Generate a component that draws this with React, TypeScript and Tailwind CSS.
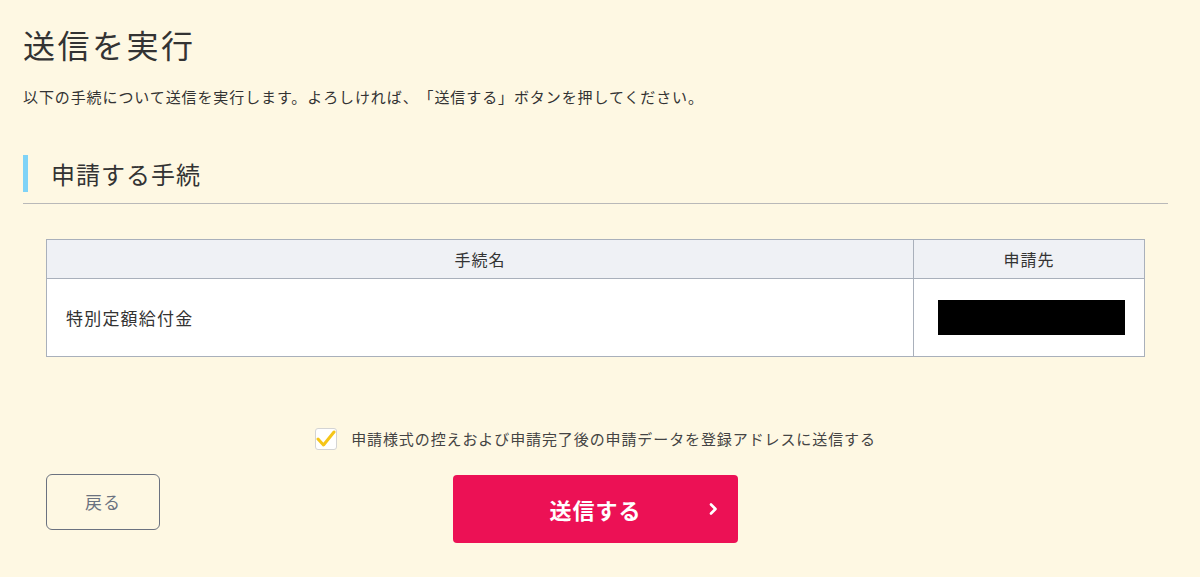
import React from "react";

export default function App() {
  const font = { fontFamily: '"Noto Sans CJK JP", "Noto Sans", sans-serif' };
  return (
    <div
      className="min-h-screen w-full bg-[#fef8e3] pl-[23px] pr-[32px] pt-[24px] text-[#333]"
      style={font}
    >
      <h1 className="text-[32px] leading-[40px] tracking-[2.5px] font-normal text-[#333]">
        送信を実行
      </h1>
      <p className="mt-[23px] text-[15px] leading-[20px] tracking-[0.9px] text-[#333] [text-spacing-trim:space-all]">
        以下の手続について送信を実行します。よろしければ、「送信する」ボタンを押してください。
      </p>

      <div className="mt-[48px] flex h-[37px] items-center border-l-[5px] border-[#7fd3f7] pl-[23px]">
        <h2 className="text-[24px] leading-[30px] tracking-[1px] font-normal text-[#333]">
          申請する手続
        </h2>
      </div>
      <div className="mt-[11px] h-px bg-[#b9b9b9]" />

      <div className="mx-[23px] mt-[35px]">
        <table className="w-full border-collapse border border-[#a9b0bb] bg-white">
          <thead>
            <tr className="h-[39px] bg-[#eff1f5]">
              <th className="border border-[#a9b0bb] text-center text-[16px] font-normal tracking-[1px] text-[#333]">
                手続名
              </th>
              <th className="w-[231px] border border-[#a9b0bb] text-center text-[16px] font-normal tracking-[1px] text-[#333]">
                申請先
              </th>
            </tr>
          </thead>
          <tbody>
            <tr className="h-[78px]">
              <td className="border border-[#a9b0bb] px-[19px] text-[17px] tracking-[1.2px] text-[#333]">
                特別定額給付金
              </td>
              <td className="border border-[#a9b0bb] pl-[24px]">
                <div className="h-[35px] w-[187px] bg-black" />
              </td>
            </tr>
          </tbody>
        </table>

        <div className="mt-[71px] flex h-[22px] items-center justify-center gap-[14px]">
          <div className="flex h-[22px] w-[22px] items-center justify-center rounded-[3px] border border-[#d4d4d4] bg-white">
            <svg width="20" height="18" viewBox="0 0 20 18" fill="none">
              <polyline
                points="2,9 7.5,15 18,2"
                stroke="#f5c518"
                strokeWidth="3"
                strokeLinecap="round"
                strokeLinejoin="round"
              />
            </svg>
          </div>
          <span className="text-[15px] leading-[20px] tracking-[0.9px] text-[#444]">
            申請様式の控えおよび申請完了後の申請データを登録アドレスに送信する
          </span>
        </div>

        <div className="mt-[24px] grid grid-cols-[1fr_auto_1fr] items-start">
          <div className="justify-self-start">
            <button className="flex h-[56px] w-[114px] items-center justify-center rounded-[6px] border border-[#6b7280] text-[17px] tracking-[1px] text-[#6b7280]">
              戻る
            </button>
          </div>
          <button className="relative mt-px flex h-[68px] w-[285px] items-center justify-center rounded-[4px] bg-[#ec1155] text-[22px] font-bold tracking-[1px] text-white">
            送信する
            <svg
              className="absolute right-[20px] top-1/2 -translate-y-1/2"
              width="10"
              height="14"
              viewBox="0 0 10 14"
              fill="none"
            >
              <polyline
                points="3,2.5 7.5,7 3,11.5"
                stroke="white"
                strokeWidth="2.6"
                strokeLinecap="round"
                strokeLinejoin="round"
              />
            </svg>
          </button>
          <div />
        </div>
      </div>
    </div>
  );
}
